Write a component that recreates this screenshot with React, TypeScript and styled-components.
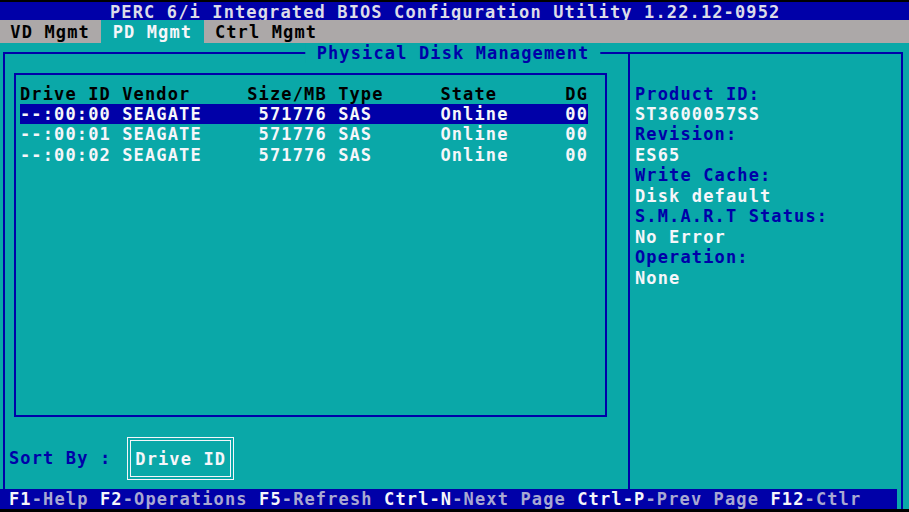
import styled, { createGlobalStyle, css } from "styled-components";

// 80x25 text mode stretched onto 909x512
const CW = 909 / 80;
const RH = 20.48;
const FONT = 17;

const c = {
  teal: "#0aa8a8",
  blue: "#0000a8",
  grey: "#aca8a8",
  white: "#f6f6fa",
  dim: "#a8a8d2",
  title: "#dcdce8",
  black: "#000000",
};

const GlobalStyle = createGlobalStyle`
  html, body {
    margin: 0;
    padding: 0;
    background: #000;
  }
`;

const textCell = css`
  font-family: "DejaVu Sans Mono", "Liberation Mono", monospace;
  font-weight: bold;
  font-size: ${FONT}px;
  letter-spacing: ${CW - FONT * 0.602}px;
  line-height: ${RH}px;
  white-space: pre;
`;

const Screen = styled.div`
  ${textCell}
  width: 909px;
  height: 512px;
  background: ${c.black};
  display: flex;
  flex-direction: column;
  overflow: hidden;
`;

const TitleBar = styled.div`
  margin-top: 2px;
  height: 18px;
  line-height: 20px;
  padding-left: 110px;
  background: ${c.blue};
  color: ${c.title};
`;

const TabBar = styled.div`
  height: 23px;
  line-height: 24px;
  background: ${c.grey};
  display: flex;
  margin-left: -1px;
`;

const Tab = styled.span<{ $active?: boolean }>`
  padding: 0 ${CW}px;
  color: ${(p) => (p.$active ? c.white : c.black)};
  background: ${(p) => (p.$active ? c.teal : "transparent")};
`;

const Main = styled.div`
  height: 446px;
  box-sizing: border-box;
  padding: 9px 6px 0 3px;
  background: ${c.teal};
  display: flex;
`;

const Frame = styled.div`
  position: relative;
  flex: 1;
  border: 2px solid ${c.blue};
  border-bottom: none;
  display: grid;
  grid-template-columns: 623px 1fr;
`;

const Legend = styled.span`
  position: absolute;
  top: -11px;
  left: 50%;
  transform: translateX(-50%);
  background: ${c.teal};
  color: ${c.blue};
`;

const LeftSection = styled.div`
  display: flex;
  flex-direction: column;
  padding: 19px 21px 0 9px;
`;

const ListBox = styled.div`
  height: 344px;
  box-sizing: border-box;
  border: 2px solid ${c.blue};
  padding: 8.5px 0 0 4px;
`;

const DiskRow = styled.div<{ $kind: "head" | "row" | "selected" }>`
  display: grid;
  grid-template-columns: ${[9, 11, 7, 1, 9, 11, 2].map((n) => `${n * CW}px`).join(" ")};
  height: ${RH}px;
  width: ${50 * CW}px;
  color: ${(p) => (p.$kind === "head" ? c.black : c.white)};
  background: ${(p) => (p.$kind === "selected" ? c.blue : "transparent")};
`;

const Num = styled.span`
  text-align: right;
`;

const SortRow = styled.div`
  display: flex;
  align-items: center;
  margin-top: 20px;
  margin-left: -5px;
  height: 43px;
  color: ${c.blue};
`;

const SortButton = styled.div`
  margin-left: 16px;
  width: 107px;
  height: 43px;
  box-sizing: border-box;
  border: 1px solid ${c.white};
  box-shadow: inset 0 0 0 2px ${c.teal}, inset 0 0 0 3px ${c.white};
  padding-left: 7px;
  line-height: 42px;
  color: ${c.white};
`;

const InfoPanel = styled.div`
  border-left: 2px solid ${c.blue};
  padding: 29.5px 0 0 5px;
`;

const InfoLine = styled.div<{ $label?: boolean }>`
  height: ${RH}px;
  color: ${(p) => (p.$label ? c.blue : c.white)};
`;

const BottomRow = styled.div`
  height: 20px;
  display: flex;
  background: ${c.teal};
`;

const StatusBar = styled.div`
  flex: 0 0 897px;
  box-sizing: border-box;
  padding-left: 9px;
  line-height: 20px;
  background: ${c.blue};
  color: ${c.dim};
`;

const Key = styled.span`
  color: ${c.white};
`;

const FrameTail = styled.div`
  width: 4px;
  border-right: 2px solid ${c.blue};
`;

interface IDisk {
  id: string;
  vendor: string;
  size: string;
  type: string;
  state: string;
  dg: string;
}

const disks: IDisk[] = [
  { id: "--:00:00", vendor: "SEAGATE", size: "571776", type: "SAS", state: "Online", dg: "00" },
  { id: "--:00:01", vendor: "SEAGATE", size: "571776", type: "SAS", state: "Online", dg: "00" },
  { id: "--:00:02", vendor: "SEAGATE", size: "571776", type: "SAS", state: "Online", dg: "00" },
];

const info: [string, string][] = [
  ["Product ID:", "ST3600057SS"],
  ["Revision:", "ES65"],
  ["Write Cache:", "Disk default"],
  ["S.M.A.R.T Status:", "No Error"],
  ["Operation:", "None"],
];

const shortcuts: [string, string][] = [
  ["F1", "-Help "],
  ["F2", "-Operations "],
  ["F5", "-Refresh "],
  ["Ctrl-N", "-Next Page "],
  ["Ctrl-P", "-Prev Page "],
  ["F12", "-Ctlr"],
];

function App() {
  return (
    <>
      <GlobalStyle />
      <Screen>
        <TitleBar>PERC 6/i Integrated BIOS Configuration Utility 1.22.12-0952</TitleBar>
        <TabBar>
          <Tab>VD Mgmt</Tab>
          <Tab $active>PD Mgmt</Tab>
          <Tab>Ctrl Mgmt</Tab>
        </TabBar>
        <Main>
          <Frame>
            <Legend> Physical Disk Management </Legend>
            <LeftSection>
              <ListBox>
                <DiskRow $kind="head">
                  <span>Drive ID</span>
                  <span>Vendor</span>
                  <Num>Size/MB</Num>
                  <span />
                  <span>Type</span>
                  <span>State</span>
                  <span>DG</span>
                </DiskRow>
                {disks.map((d, i) => (
                  <DiskRow key={d.id} $kind={i === 0 ? "selected" : "row"}>
                    <span>{d.id}</span>
                    <span>{d.vendor}</span>
                    <Num>{d.size}</Num>
                    <span />
                    <span>{d.type}</span>
                    <span>{d.state}</span>
                    <span>{d.dg}</span>
                  </DiskRow>
                ))}
              </ListBox>
              <SortRow>
                Sort By :
                <SortButton>Drive ID</SortButton>
              </SortRow>
            </LeftSection>
            <InfoPanel>
              {info.map(([label, value]) => (
                <div key={label}>
                  <InfoLine $label>{label}</InfoLine>
                  <InfoLine>{value}</InfoLine>
                </div>
              ))}
            </InfoPanel>
          </Frame>
        </Main>
        <BottomRow>
          <StatusBar>
            {shortcuts.map(([k, desc]) => (
              <span key={k}>
                <Key>{k}</Key>
                {desc}
              </span>
            ))}
          </StatusBar>
          <FrameTail />
        </BottomRow>
      </Screen>
    </>
  );
}

export default App;
